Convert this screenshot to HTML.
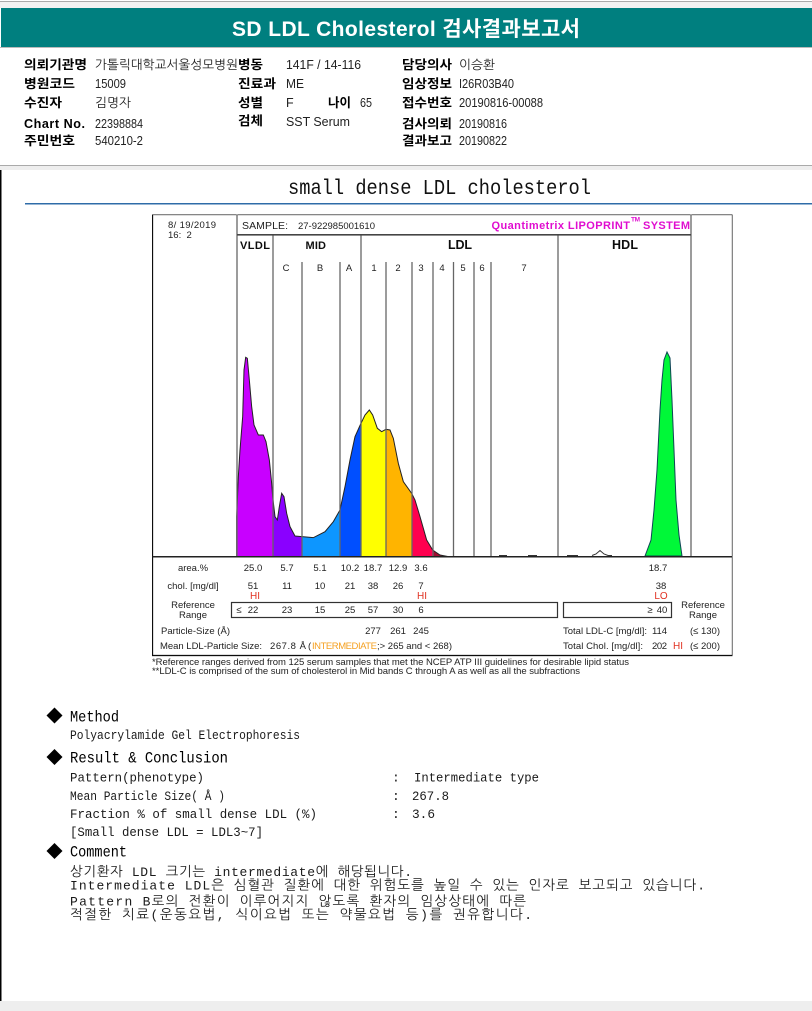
<!DOCTYPE html>
<html lang="ko"><head><meta charset="utf-8"><title>SD LDL Cholesterol 검사결과보고서</title>
<style>
html,body{margin:0;padding:0;background:#fff;width:812px;height:1011px;overflow:hidden}
svg{display:block}
text{white-space:pre}
.h{font-family:"Liberation Sans","NanumGothic","Noto Sans CJK KR",sans-serif;font-size:12.5px;fill:#222}
.l{font-family:"Liberation Sans","Noto Sans CJK KR",sans-serif;font-size:12.6px;font-weight:700;fill:#000}
.m{font-family:"Liberation Mono","NanumGothic",monospace;font-size:13px;fill:#1a1a1a}
.k{font-family:"Liberation Mono","NanumGothic",monospace;font-size:16px;fill:#000}
.g{font-size:13.5px}
.c{font-family:"Liberation Sans",sans-serif;font-size:9.5px;fill:#222}
.b{font-family:"Liberation Sans",sans-serif;font-size:11px;font-weight:700;fill:#111}
.B{font-family:"Liberation Sans",sans-serif;font-size:12.5px;font-weight:700;fill:#111}
.r{font-family:"Liberation Sans",sans-serif;font-size:10px;fill:#e03020}
.q{font-family:"Liberation Sans",sans-serif;font-size:11px;font-weight:700;fill:#e010d0}
.v{stroke:#666;stroke-width:1.3}
</style></head><body>
<svg xmlns="http://www.w3.org/2000/svg" width="812" height="1011" viewBox="0 0 812 1011">
<defs>
<filter id="soft" x="0" y="0" width="100%" height="100%"><feGaussianBlur stdDeviation="0.35"/></filter>
<path id="curve" d="M20,620 L20,500 L25,380 L30,300 L38,200 L42,60 L47,22 L52,25 L58,90 L65,170 L72,225 L85,255 L100,255 L108,275 L118,330 L125,400 L128,440 L135,500 L142,510 L148,470 L155,430 L162,440 L170,490 L180,530 L195,558 L216,560 L250,563 L285,545 L310,515 L330,480 L345,410 L360,330 L375,260 L392,222 L405,195 L418,180 L428,195 L442,235 L455,245 L468,238 L480,240 L490,265 L505,340 L520,395 L545,430 L555,450 L570,500 L590,570 L608,600 L630,615 L655,620 Z"/>
<clipPath id="cc"><use href="#curve"/></clipPath>
</defs>
<rect width="812" height="1011" fill="#fff"/>
<rect y="1" width="812" height="1" fill="#aaa"/>
<rect y="2" width="812" height="6" fill="#f2f2f2"/>
<rect x="1" y="8" width="811" height="39" fill="#007f7f"/>
<rect y="47" width="812" height="1" fill="#bbb"/>
<text x="232" y="36" textLength="348" style="font-family:'Liberation Sans','Noto Sans CJK KR',sans-serif;font-size:21px;font-weight:700;fill:#fff">SD LDL Cholesterol 검사결과보고서</text>

<text class="l" x="24" y="69" textLength="63" lengthAdjust="spacingAndGlyphs">의뢰기관명</text>
<text class="h" x="95" y="69" textLength="143" lengthAdjust="spacingAndGlyphs">가톨릭대학교서울성모병원</text>
<text class="l" x="238" y="69" textLength="25" lengthAdjust="spacingAndGlyphs">병동</text>
<text class="h" x="286" y="69" textLength="75" lengthAdjust="spacingAndGlyphs">141F / 14-116</text>
<text class="l" x="402" y="69" textLength="50" lengthAdjust="spacingAndGlyphs">담당의사</text>
<text class="h" x="459" y="69" textLength="36" lengthAdjust="spacingAndGlyphs">이승환</text>

<text class="l" x="24" y="88" textLength="51" lengthAdjust="spacingAndGlyphs">병원코드</text>
<text class="h" x="95" y="88" textLength="31" lengthAdjust="spacingAndGlyphs">15009</text>
<text class="l" x="238" y="88" textLength="38" lengthAdjust="spacingAndGlyphs">진료과</text>
<text class="h" x="286" y="88" textLength="18" lengthAdjust="spacingAndGlyphs">ME</text>
<text class="l" x="402" y="88" textLength="50" lengthAdjust="spacingAndGlyphs">임상정보</text>
<text class="h" x="459" y="88" textLength="55" lengthAdjust="spacingAndGlyphs">I26R03B40</text>

<text class="l" x="24" y="107" textLength="38" lengthAdjust="spacingAndGlyphs">수진자</text>
<text class="h" x="95" y="107" textLength="36" lengthAdjust="spacingAndGlyphs">김명자</text>
<text class="l" x="238" y="107" textLength="25" lengthAdjust="spacingAndGlyphs">성별</text>
<text class="h" x="286" y="107">F</text>
<text class="l" x="328" y="107" textLength="23" lengthAdjust="spacingAndGlyphs">나이</text>
<text class="h" x="360" y="107" textLength="12" lengthAdjust="spacingAndGlyphs">65</text>
<text class="l" x="402" y="107" textLength="50" lengthAdjust="spacingAndGlyphs">접수번호</text>
<text class="h" x="459" y="107" textLength="84" lengthAdjust="spacingAndGlyphs">20190816-00088</text>

<text class="l" x="24" y="128" textLength="61">Chart No.</text>
<text class="h" x="95" y="128" textLength="48" lengthAdjust="spacingAndGlyphs">22398884</text>
<text class="l" x="238" y="125" textLength="25" lengthAdjust="spacingAndGlyphs">검체</text>
<text class="h" x="286" y="126" textLength="64" lengthAdjust="spacingAndGlyphs">SST Serum</text>
<text class="l" x="402" y="128" textLength="50" lengthAdjust="spacingAndGlyphs">검사의뢰</text>
<text class="h" x="459" y="128" textLength="48" lengthAdjust="spacingAndGlyphs">20190816</text>

<text class="l" x="24" y="145" textLength="51" lengthAdjust="spacingAndGlyphs">주민번호</text>
<text class="h" x="95" y="145" textLength="48" lengthAdjust="spacingAndGlyphs">540210-2</text>
<text class="l" x="402" y="145" textLength="50" lengthAdjust="spacingAndGlyphs">결과보고</text>
<text class="h" x="459" y="145" textLength="48" lengthAdjust="spacingAndGlyphs">20190822</text>

<rect y="165" width="812" height="1" fill="#aaa"/>
<rect y="166" width="812" height="4" fill="#eee"/>
<rect x="0" y="170" width="1.5" height="831" fill="#000"/>
<rect y="1001" width="812" height="10" fill="#eee"/>

<text x="288" y="194" textLength="303" lengthAdjust="spacingAndGlyphs" style="font-family:'Liberation Mono',monospace;font-size:21px;fill:#111">small dense LDL cholesterol</text>
<rect x="25" y="203" width="787" height="1.5" fill="#2f6ca8"/>

<!-- chart -->
<g filter="url(#soft)">
<rect x="152.5" y="214.5" width="580" height="441" fill="#fff" stroke="#111" stroke-width="1.3"/>
<g transform="translate(230,350) scale(0.33333)">
<g clip-path="url(#cc)">
<rect x="0" y="0" width="128" height="620" fill="#c800ff"/>
<rect x="128" y="0" width="88" height="620" fill="#8a00ff"/>
<rect x="216" y="0" width="114" height="620" fill="#0a96ff"/>
<rect x="330" y="0" width="62" height="620" fill="#0050ff"/>
<rect x="392" y="0" width="76" height="620" fill="#ffff00"/>
<rect x="468" y="0" width="77" height="620" fill="#ffb400"/>
<rect x="545" y="0" width="63" height="620" fill="#ff0050"/>
<rect x="608" y="0" width="60" height="620" fill="#a01030"/>
</g>
<use href="#curve" fill="none" stroke="#222" stroke-width="3"/>
</g>
<path d="M645,556 L651,540 L654,510 L657,470 L660,410 L662,380 L664,360 L667,352 L670,358 L672,400 L674,450 L676,500 L679,535 L682,556 Z" fill="#00f838" stroke="#145" stroke-width="1"/>
<path d="M499,555.5H507M528,555.5H537M567,555.5H578M592,555.5L596,554L600,550.500L604,554L608,555.500H612" fill="none" stroke="#333" stroke-width="1"/>

<path class="v" d="M237,214.5V556M273,235V556M361,235V556M558,235V556M691,214.5V556" fill="none"/>
<path class="v" d="M302,262V556M340,262V556M386,262V556M412,262V556M433,262V556M453.5,262V556M474,262V556M491,262V556" fill="none"/>
<rect x="237" y="234" width="454" height="1.6" fill="#444"/>
<rect x="152.5" y="556" width="580" height="1.5" fill="#222"/>

<text class="c" x="168" y="228" textLength="48">8/ 19/2019</text>
<text class="c" x="168" y="238">16:  2</text>
<text class="c" x="242" y="229" textLength="46" style="font-size:10.5px">SAMPLE:</text>
<text class="c" x="298" y="229" textLength="77">27-922985001610</text>
<text class="q" x="491.500" y="229" textLength="138.500">Quantimetrix LIPOPRINT</text>
<text x="631" y="221.500" textLength="9" style="font-family:'Liberation Sans',sans-serif;font-size:6.5px;font-weight:700;fill:#e010d0">TM</text>
<text class="q" x="643" y="229" textLength="47">SYSTEM</text>
<text class="b" x="240" y="249" textLength="30">VLDL</text>
<text class="b" x="305.500" y="249" textLength="20.500">MID</text>
<text class="B" x="448" y="249" textLength="24">LDL</text>
<text class="B" x="612" y="249" textLength="26">HDL</text>
<g text-anchor="middle">
<text class="c" x="286" y="271">C</text><text class="c" x="320" y="271">B</text><text class="c" x="349" y="271">A</text>
<text class="c" x="374" y="271">1</text><text class="c" x="398" y="271">2</text><text class="c" x="421" y="271">3</text>
<text class="c" x="442" y="271">4</text><text class="c" x="463" y="271">5</text><text class="c" x="482" y="271">6</text><text class="c" x="524" y="271">7</text>

<text class="c" x="193" y="571">area.%</text>
<text class="c" x="253" y="571">25.0</text><text class="c" x="287" y="571">5.7</text><text class="c" x="320" y="571">5.1</text><text class="c" x="350" y="571">10.2</text><text class="c" x="373" y="571">18.7</text><text class="c" x="398" y="571">12.9</text><text class="c" x="421" y="571">3.6</text><text class="c" x="658" y="571">18.7</text>

<text class="c" x="193" y="589">chol. [mg/dl]</text>
<text class="c" x="253" y="589">51</text><text class="c" x="287" y="589">11</text><text class="c" x="320" y="589">10</text><text class="c" x="350" y="589">21</text><text class="c" x="373" y="589">38</text><text class="c" x="398" y="589">26</text><text class="c" x="421" y="589">7</text><text class="c" x="661" y="589">38</text>
<text class="r" x="255" y="599">HI</text><text class="r" x="422" y="599">HI</text><text class="r" x="661" y="599">LO</text>

<text class="c" x="193" y="608">Reference</text><text class="c" x="193" y="618">Range</text>
<text class="c" x="703" y="608">Reference</text><text class="c" x="703" y="618">Range</text>

<text class="c" x="239" y="613">≤</text>
<text class="c" x="253" y="613">22</text><text class="c" x="287" y="613">23</text><text class="c" x="320" y="613">15</text><text class="c" x="350" y="613">25</text><text class="c" x="373" y="613">57</text><text class="c" x="398" y="613">30</text><text class="c" x="421" y="613">6</text>
<text class="c" x="650" y="613">≥</text><text class="c" x="662" y="613">40</text>
<text class="c" x="373" y="634">277</text><text class="c" x="398" y="634">261</text><text class="c" x="421" y="634">245</text>
</g>
<rect x="231.5" y="602.5" width="326" height="15" fill="none" stroke="#333" stroke-width="1.2"/>
<rect x="563.5" y="602.5" width="108" height="15" fill="none" stroke="#333" stroke-width="1.2"/>
<text class="c" x="161" y="634" textLength="69">Particle-Size (Å)</text>
<text class="c" x="160" y="649" textLength="102">Mean LDL-Particle Size:</text>
<text class="c" x="270" y="649" textLength="36">267.8 Å</text>
<text class="c" x="308" y="649">(</text>
<text class="c" x="312" y="649" textLength="65" style="fill:#f5a020">INTERMEDIATE</text>
<text class="c" x="377" y="649" textLength="75">;&gt; 265 and &lt; 268)</text>
<text class="c" x="563" y="634" textLength="84">Total LDL-C [mg/dl]:</text>
<text class="c" x="652" y="634" textLength="15">114</text>
<text class="c" x="690" y="634" textLength="30">(≤ 130)</text>
<text class="c" x="563" y="649" textLength="80">Total Chol. [mg/dl]:</text>
<text class="c" x="652" y="649" textLength="15">202</text>
<text class="r" x="673" y="649">HI</text>
<text class="c" x="690" y="649" textLength="30">(≤ 200)</text>
<text class="c" x="152" y="665" textLength="477">*Reference ranges derived from 125 serum samples that met the NCEP ATP III guidelines for desirable lipid status</text>
<text class="c" x="152" y="674" textLength="428">**LDL-C is comprised of the sum of cholesterol in Mid bands C through A as well as all the subfractions</text>
</g>

<!-- report text -->
<path d="M54.5,707.500L62.5,715.500L54.5,723.500L46.500,715.500Z M54.5,749L62.5,757L54.5,765L46.500,757Z M54.5,843L62.5,851L54.5,859L46.500,851Z" fill="#000"/>
<text class="k" x="70" y="721.500" textLength="49" lengthAdjust="spacingAndGlyphs">Method</text>
<text class="m" x="70" y="739" textLength="230" lengthAdjust="spacingAndGlyphs">Polyacrylamide Gel Electrophoresis</text>
<text class="k" x="70" y="762.500" textLength="158" lengthAdjust="spacingAndGlyphs">Result &amp; Conclusion</text>
<text class="m" x="70" y="781.500" textLength="134" lengthAdjust="spacingAndGlyphs">Pattern(phenotype)</text>
<text class="m" x="392" y="781.500">:</text>
<text class="m" x="414" y="781.500" textLength="125" lengthAdjust="spacingAndGlyphs">Intermediate type</text>
<text class="m" x="70" y="800" textLength="155" lengthAdjust="spacingAndGlyphs">Mean Particle Size( Å )</text>
<text class="m" x="392" y="800">:</text>
<text class="m" x="412" y="800" textLength="37" lengthAdjust="spacingAndGlyphs">267.8</text>
<text class="m" x="70" y="818" textLength="247" lengthAdjust="spacingAndGlyphs">Fraction % of small dense LDL (%)</text>
<text class="m" x="392" y="818">:</text>
<text class="m" x="412" y="818" textLength="23" lengthAdjust="spacingAndGlyphs">3.6</text>
<text class="m" x="70" y="836" textLength="193" lengthAdjust="spacingAndGlyphs">[Small dense LDL = LDL3~7]</text>
<text class="k" x="70" y="856.500" textLength="57" lengthAdjust="spacingAndGlyphs">Comment</text>
<text class="m" x="70" y="876" textLength="342"><tspan class="g">상기환자</tspan> LDL <tspan class="g">크기는</tspan> intermediate<tspan class="g">에</tspan> <tspan class="g">해당됩니다</tspan>.</text>
<text class="m" x="70" y="889.500" textLength="635">Intermediate LDL<tspan class="g">은</tspan> <tspan class="g">심혈관</tspan> <tspan class="g">질환에</tspan> <tspan class="g">대한</tspan> <tspan class="g">위험도를</tspan> <tspan class="g">높일</tspan> <tspan class="g">수</tspan> <tspan class="g">있는</tspan> <tspan class="g">인자로</tspan> <tspan class="g">보고되고</tspan> <tspan class="g">있습니다</tspan>.</text>
<text class="m" x="70" y="905.500" textLength="456">Pattern B<tspan class="g">로의</tspan> <tspan class="g">전환이</tspan> <tspan class="g">이루어지지</tspan> <tspan class="g">않도록</tspan> <tspan class="g">환자의</tspan> <tspan class="g">임상상태에</tspan> <tspan class="g">따른</tspan></text>
<text class="m" x="70" y="919" textLength="462"><tspan class="g">적절한</tspan> <tspan class="g">치료</tspan>(<tspan class="g">운동요법</tspan>, <tspan class="g">식이요법</tspan> <tspan class="g">또는</tspan> <tspan class="g">약물요법</tspan> <tspan class="g">등</tspan>)<tspan class="g">를</tspan> <tspan class="g">권유합니다</tspan>.</text>
</svg>
</body></html>
